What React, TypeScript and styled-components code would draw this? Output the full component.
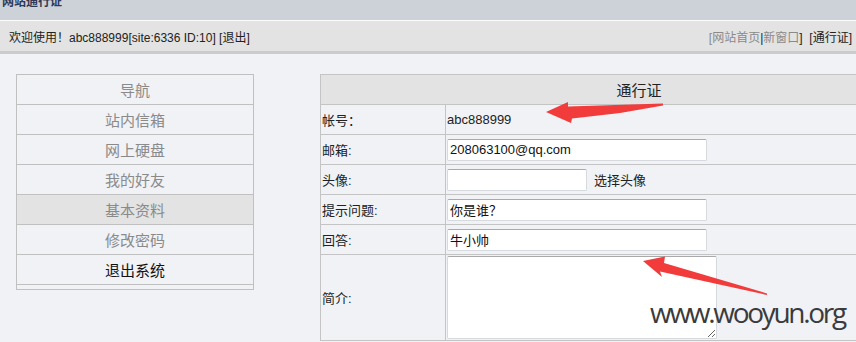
import styled, { createGlobalStyle } from "styled-components";

const GlobalStyle = createGlobalStyle`
  body {
    margin: 0;
    background: #f0f2f6;
    overflow: hidden;
    font-family: "Liberation Sans", "Noto Sans CJK SC", sans-serif;
    font-size: 13px;
    color: #222;
  }
`;

const navItems = ["导航", "站内信箱", "网上硬盘", "我的好友", "基本资料", "修改密码", "退出系统"];

const App = () => {
  return (
    <Page>
      <GlobalStyle />
      <TitleBar>
        <span>网站通行证</span>
      </TitleBar>
      <WelcomeBar>
        <span>欢迎使用！abc888999[site:6336 ID:10] [退出]</span>
        <Links>
          <Muted>[网站首页</Muted>|<Muted>新窗口</Muted>] &nbsp;[通行证]
        </Links>
      </WelcomeBar>
      <Strip />
      <Content>
        <Nav>
          {navItems.map((item, i) => (
            <NavItem key={item} active={i === 4} dark={i === 6}>
              {item}
            </NavItem>
          ))}
          <NavSpacer />
        </Nav>
        <Panel>
          <PanelHead>通行证</PanelHead>
          <Row>
            <Label>帐号：</Label>
            <Value>abc888999</Value>
          </Row>
          <Row>
            <Label>邮箱:</Label>
            <Value>
              <TextInput width={260} defaultValue="208063100@qq.com" />
            </Value>
          </Row>
          <Row>
            <Label>头像:</Label>
            <Value>
              <TextInput width={140} defaultValue="" />
              <Pick>选择头像</Pick>
            </Value>
          </Row>
          <Row>
            <Label>提示问题:</Label>
            <Value>
              <TextInput width={260} defaultValue="你是谁？" />
            </Value>
          </Row>
          <Row>
            <Label>回答:</Label>
            <Value>
              <TextInput width={260} defaultValue="牛小帅" />
            </Value>
          </Row>
          <Row tall>
            <Label>简介:</Label>
            <Value>
              <Intro />
            </Value>
          </Row>
        </Panel>
      </Content>

      <Marks width="856" height="342" viewBox="0 0 856 342">
        <polygon
          fill="#f23b3b"
          points="546,112 568,102 568,106.5 663,103.5 663,105.5 620,113 572,118.5 571,123"
        />
        <polygon
          fill="#f23b3b"
          points="643,261 665,256.5 664,263 767,293.5 767,295 660,271.5 662,277"
        />
      </Marks>
      <Watermark>www.wooyun.org</Watermark>
    </Page>
  );
};

export default App;

const Page = styled.div`
  position: relative;
  width: 856px;
  height: 342px;
  overflow: hidden;
`;

const TitleBar = styled.div`
  height: 20px;
  background: #cdd2d9;
  border-bottom: 1px solid #fafafa;
  overflow: hidden;
  padding-left: 2px;

  span {
    display: block;
    margin-top: -5px;
    font-size: 12px;
    line-height: 14px;
    font-weight: bold;
    color: #2e3a58;
  }
`;

const WelcomeBar = styled.div`
  height: 30px;
  background: #e3e3e3;
  display: flex;
  align-items: center;
  justify-content: space-between;
  padding: 0 4px 0 9px;
  font-size: 12px;
  color: #222;
`;

const Links = styled.span`
  color: #222;
`;

const Muted = styled.span`
  color: #8a8a8a;
`;

const Strip = styled.div`
  height: 3px;
  background: #cbcbcb;
`;

const Content = styled.div`
  display: flex;
  align-items: flex-start;
  gap: 66px;
  padding: 20px 0 0 16px;
`;

const Nav = styled.div`
  width: 238px;
  box-sizing: border-box;
  border: 1px solid #c0c0c0;
  flex-shrink: 0;
`;

const NavItem = styled.div<{ active?: boolean; dark?: boolean }>`
  height: 30px;
  box-sizing: border-box;
  border-bottom: 1px solid #c0c0c0;
  background: ${(p) => (p.active ? "#e3e3e3" : "transparent")};
  color: ${(p) => (p.dark ? "#111" : "#8a8a8a")};
  font-size: 15px;
  display: flex;
  align-items: center;
  justify-content: center;
`;

const NavSpacer = styled.div`
  height: 4px;
`;

const Panel = styled.div`
  width: 638px;
  flex-shrink: 0;
  box-sizing: border-box;
  border: 1px solid #c4c4c4;
  border-bottom: none;
`;

const PanelHead = styled.div`
  height: 30px;
  box-sizing: border-box;
  border-bottom: 1px solid #c4c4c4;
  background: #e3e3e3;
  display: flex;
  align-items: center;
  justify-content: center;
  font-size: 15px;
  color: #222;
`;

const Row = styled.div<{ tall?: boolean }>`
  display: grid;
  grid-template-columns: 125px 1fr;
  height: ${(p) => (p.tall ? "86px" : "30px")};
  box-sizing: border-box;
  border-bottom: 1px solid #c4c4c4;
`;

const Label = styled.div`
  display: flex;
  align-items: center;
  padding-left: 1px;
  border-right: 1px solid #c4c4c4;
  font-size: 13px;
  color: #222;
`;

const Value = styled.div`
  display: flex;
  align-items: center;
  padding-left: 1px;
  font-size: 13px;
  color: #222;
`;

const TextInput = styled.input<{ width: number }>`
  width: ${(p) => p.width}px;
  height: 22px;
  box-sizing: border-box;
  margin: 0;
  padding: 0 2px;
  border: 1px solid #d6d9de;
  border-top-color: #a9a9a9;
  border-radius: 2px;
  background: #fff;
  font-family: "Liberation Sans", "Noto Sans CJK SC", sans-serif;
  font-size: 13px;
  color: #111;
  outline: none;
`;

const Pick = styled.span`
  margin-left: 7px;
`;

const Intro = styled.textarea`
  width: 270px;
  height: 83px;
  box-sizing: border-box;
  margin: 0;
  padding: 2px;
  border: 1px solid #d6d9de;
  border-top-color: #a9a9a9;
  border-radius: 2px;
  background: #fff;
  outline: none;
`;

const Marks = styled.svg`
  position: absolute;
  left: 0;
  top: 0;
  pointer-events: none;
`;

const Watermark = styled.div`
  position: absolute;
  left: 650px;
  top: 296px;
  font-family: "Open Sans", sans-serif;
  font-size: 28px;
  line-height: 32px;
  letter-spacing: -2.3px;
  color: #3b3b3b;
`;
